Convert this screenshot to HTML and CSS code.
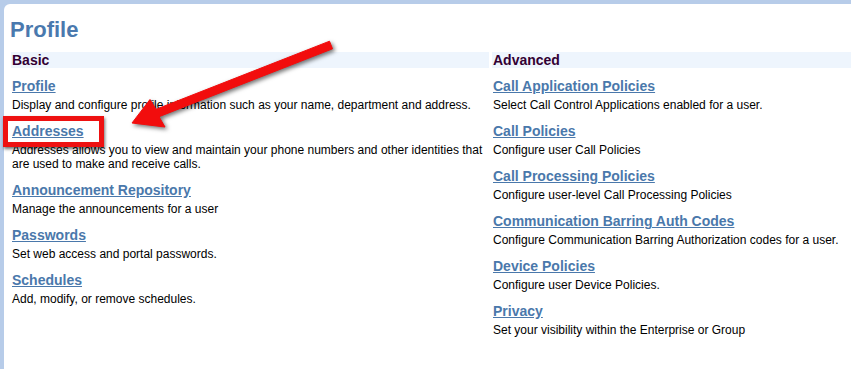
FILE: index.html
```html
<!DOCTYPE html>
<html lang="en">
<head>
<meta charset="utf-8">
<title>Profile</title>
<link rel="stylesheet" href="styles.css">
</head>
<body>
<div class="panel">
  <h1 class="title">Profile</h1>
  <div class="columns">
    <section class="col">
      <h2 class="col-head">Basic</h2>
      <ul class="items">
        <li class="item"><a class="item-link" href="#">Profile</a><p class="item-desc">Display and configure profile information such as your name, department and address.</p></li>
        <li class="item"><a class="item-link" href="#">Addresses</a><p class="item-desc">Addresses allows you to view and maintain your phone numbers and other identities that are used to make and receive calls.</p></li>
        <li class="item"><a class="item-link" href="#">Announcement Repository</a><p class="item-desc">Manage the announcements for a user</p></li>
        <li class="item"><a class="item-link" href="#">Passwords</a><p class="item-desc">Set web access and portal passwords.</p></li>
        <li class="item"><a class="item-link" href="#">Schedules</a><p class="item-desc">Add, modify, or remove schedules.</p></li>
      </ul>
    </section>
    <section class="col">
      <h2 class="col-head">Advanced</h2>
      <ul class="items">
        <li class="item"><a class="item-link" href="#">Call Application Policies</a><p class="item-desc">Select Call Control Applications enabled for a user.</p></li>
        <li class="item"><a class="item-link" href="#">Call Policies</a><p class="item-desc">Configure user Call Policies</p></li>
        <li class="item"><a class="item-link" href="#">Call Processing Policies</a><p class="item-desc">Configure user-level Call Processing Policies</p></li>
        <li class="item"><a class="item-link" href="#">Communication Barring Auth Codes</a><p class="item-desc">Configure Communication Barring Authorization codes for a user.</p></li>
        <li class="item"><a class="item-link" href="#">Device Policies</a><p class="item-desc">Configure user Device Policies.</p></li>
        <li class="item"><a class="item-link" href="#">Privacy</a><p class="item-desc">Set your visibility within the Enterprise or Group</p></li>
      </ul>
    </section>
  </div>
</div>
<div class="highlight-box"></div>
<svg class="annotation-arrow" width="851" height="369" viewBox="0 0 851 369" aria-hidden="true">
  <polygon points="329.5,41.2 332.5,48.8 159,116.7 165,127 132,123 150,99.5 156,109.3" />
</svg>
</body>
</html>
```

FILE: styles.css
```css
html, body {
  margin: 0;
  padding: 0;
}

body {
  background: #b7cce9;
  width: 851px;
  height: 369px;
  overflow: hidden;
  position: relative;
  font-family: "Liberation Sans", Arial, sans-serif;
}

.panel {
  margin: 4px 0 0 4px;
  background: #ffffff;
  border-top-left-radius: 6px;
  height: 365px;
  padding: 13px 0 0 6px;
  box-sizing: border-box;
}

.title {
  margin: 0 0 10px 0;
  font-size: 22px;
  line-height: 25px;
  font-weight: bold;
  color: #4a79ae;
}

.columns {
  display: grid;
  grid-template-columns: 478px 1fr;
  column-gap: 3px;
  margin-left: 1px;
}

.col-head {
  margin: 0;
  height: 16px;
  line-height: 16px;
  font-size: 14px;
  font-weight: bold;
  color: #330033;
  background: #eef5fd;
  padding-left: 1px;
}

.items {
  list-style: none;
  margin: 9px 0 0 0;
  padding: 0 0 0 1px;
  display: flex;
  flex-direction: column;
  gap: 10px;
}

.item {
  display: flex;
  flex-direction: column;
  align-items: flex-start;
}

.item-link {
  font-size: 14px;
  line-height: 18px;
  font-weight: bold;
  color: #4a78ab;
  text-decoration: underline;
}

.item-desc {
  margin: 3px 0 0 0;
  font-size: 12px;
  line-height: 14px;
  color: #000000;
}

.highlight-box {
  position: absolute;
  left: 3px;
  top: 116px;
  width: 101px;
  height: 31px;
  box-sizing: border-box;
  border: 5px solid #ee1111;
  box-shadow: 1px 2px 3px rgba(0, 0, 0, 0.55);
}

.annotation-arrow {
  position: absolute;
  left: 0;
  top: 0;
  pointer-events: none;
  filter: drop-shadow(2px 2px 2px rgba(0, 0, 0, 0.55));
}

.annotation-arrow polygon {
  fill: #f20d0d;
  stroke: #f20d0d;
  stroke-width: 1;
  stroke-linejoin: round;
}
```
